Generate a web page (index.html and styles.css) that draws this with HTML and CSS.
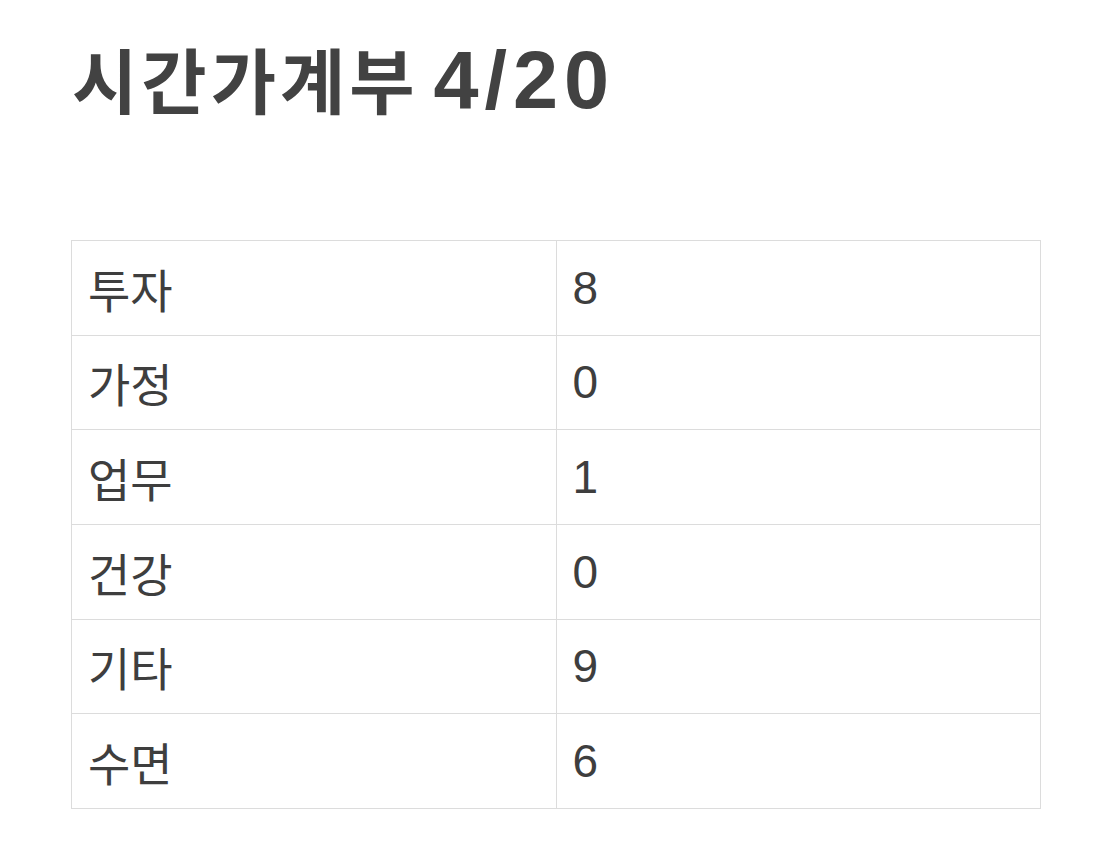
FILE: index.html
```html
<!DOCTYPE html>
<html lang="ko">
<head>
<meta charset="utf-8">
<link rel="stylesheet" href="styles.css">
</head>
<body>
<div class="page">
  <h1 class="title"><span class="title-ko">시간가계부</span> <span class="title-num">4/20</span></h1>
  <table class="ledger">
    <tr><td>투자</td><td>8</td></tr>
    <tr><td>가정</td><td>0</td></tr>
    <tr><td>업무</td><td>1</td></tr>
    <tr><td>건강</td><td>0</td></tr>
    <tr><td>기타</td><td>9</td></tr>
    <tr><td>수면</td><td>6</td></tr>
  </table>
</div>
</body>
</html>
```
FILE: styles.css
```css
html, body {
  margin: 0;
  padding: 0;
  background: #fff;
}
.page {
  padding: 36px 0 0 71px;
  font-family: "Liberation Sans", "Noto Sans CJK KR", sans-serif;
  color: #404040;
}
.title {
  margin: 0 0 116px 1px;
  height: 88px;
  line-height: 88px;
  font-weight: bold;
  color: #424242;
  white-space: nowrap;
}
.title-ko {
  font-size: 71px;
  letter-spacing: 4px;
}
.title-num {
  margin-left: 6px;
  font-size: 81px;
  letter-spacing: 6px;
}
.ledger {
  border-collapse: collapse;
  width: 970px;
  table-layout: fixed;
}
.ledger td {
  border: 1px solid #dcdcdc;
  height: 94.67px;
  padding: 0 16px;
  font-size: 46px;
  vertical-align: middle;
  box-sizing: border-box;
  color: #3e3e3e;
}
```
